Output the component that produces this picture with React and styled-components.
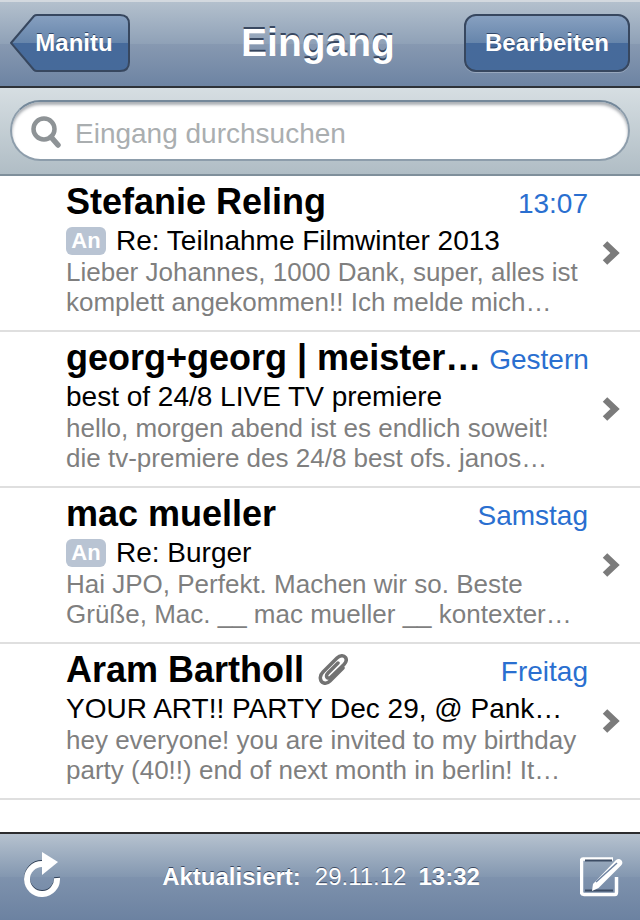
import styled, { createGlobalStyle } from 'styled-components'

const Global = createGlobalStyle`
  html, body {
    margin: 0;
    padding: 0;
    background: white;
  }
  * {
    box-sizing: border-box;
  }
`

const Page = styled.div`
  width: 640px;
  height: 920px;
  display: flex;
  flex-direction: column;
  overflow: hidden;
  font-family: 'Liberation Sans', Arial, sans-serif;
`

const NavBar = styled.header`
  height: 88px;
  flex: none;
  display: flex;
  align-items: center;
  justify-content: space-between;
  padding: 0 10px 2px 10px;
  position: relative;
  border-top: 2px solid #d3d9df;
  border-bottom: 2px solid #2e3238;
  background: linear-gradient(#b3c0cd 0%, #8fa1b7 50%, #8799b1 50%, #6d84a3 100%);
`

const Title = styled.h1`
  position: absolute;
  left: 0;
  right: 4px;
  top: 19px;
  margin: 0;
  text-align: center;
  font-size: 39px;
  line-height: 44px;
  font-weight: bold;
  color: white;
  text-shadow: 0 -2px 0 rgba(40, 55, 80, 0.85);
`

const BackButton = styled.button`
  position: relative;
  width: 120px;
  height: 58px;
  margin: 0;
  padding: 0 0 0 8px;
  border: 0;
  background: none;
  font: bold 24px 'Liberation Sans', Arial, sans-serif;
  color: white;
  text-shadow: 0 -1px 0 rgba(20, 40, 70, 0.7);

  svg {
    position: absolute;
    left: 0;
    top: 0;
  }

  span {
    position: relative;
  }
`

const EditButton = styled.button`
  width: 166px;
  height: 58px;
  margin: 0;
  padding: 0;
  border: 2px solid #37475f;
  border-radius: 12px;
  background: linear-gradient(#87a0c0 0%, #6685ab 50%, #466a9b 50%, #466a9a 100%);
  box-shadow: 0 1px 0 rgba(255, 255, 255, 0.25);
  font: bold 24px 'Liberation Sans', Arial, sans-serif;
  color: white;
  text-shadow: 0 -1px 0 rgba(20, 40, 70, 0.7);
`

const SearchBar = styled.div`
  height: 88px;
  flex: none;
  padding: 12px 10px 13px 10px;
  border-bottom: 2px solid #7f8f9b;
  background: linear-gradient(#d6dee2, #b0bdc5);
`

const SearchField = styled.div`
  height: 61px;
  display: flex;
  align-items: center;
  gap: 14px;
  padding: 2px 0 0 19px;
  border: 2px solid #8d9dab;
  border-top-color: #74889a;
  border-radius: 31px;
  background: white;
  box-shadow: inset 0 3px 3px rgba(70, 80, 90, 0.45);
  font-size: 28px;
  line-height: 32px;
  color: #aaaeb0;

  span {
    position: relative;
    top: 2px;
  }
`

const List = styled.main`
  flex: 1;
  background: white;
`

const Row = styled.article`
  height: 156px;
  padding: 8px 0 0 66px;
  position: relative;
  border-bottom: 2px solid #dfdfdf;
`

const TopLine = styled.div`
  height: 38px;
  width: 522px;
  display: flex;
  align-items: center;
  justify-content: space-between;
  gap: 8px;
`

const Sender = styled.div`
  display: flex;
  align-items: center;
  gap: 14px;
  margin-top: -2px;
  font-size: 36px;
  font-weight: bold;
  color: black;
  white-space: nowrap;
`

const When = styled.time`
  margin-top: 2px;
  font-size: 28px;
  color: #2a6fd0;
  white-space: nowrap;
`

const SubjectLine = styled.div`
  height: 36px;
  padding-top: 1px;
  display: flex;
  align-items: center;
  gap: 10px;
  font-size: 28px;
  color: black;
  white-space: nowrap;
`

const Badge = styled.span`
  width: 40px;
  height: 28px;
  display: flex;
  align-items: center;
  justify-content: center;
  border-radius: 6px;
  background: #b9c4d3;
  font-size: 22px;
  font-weight: bold;
  color: white;
`

const Preview = styled.p`
  margin: -1px 0 0 0;
  width: 540px;
  font-size: 26px;
  line-height: 30px;
  color: #7f7f7f;
  white-space: pre-line;
`

const Chevron = styled.svg`
  position: absolute;
  right: 20px;
  top: 64px;
`

const ToolBar = styled.footer`
  height: 88px;
  flex: none;
  display: flex;
  align-items: center;
  justify-content: space-between;
  padding: 0 16px 0 24px;
  border-top: 2px solid #2c2c2e;
  background: linear-gradient(#b6c2cf 0%, #8397b0 50%, #7e92ad 50%, #6c82a1 100%);
`

const RefreshSvg = styled.svg`
  margin-bottom: 6px;
`

const Status = styled.div`
  display: flex;
  gap: 14px;
  font-size: 24px;
  color: white;
  text-shadow: 0 -1px 0 rgba(30, 45, 70, 0.75);

  b {
    font-weight: bold;
  }

  b:last-child {
    margin-left: -2px;
  }
`

const mails = [
  {
    sender: 'Stefanie Reling',
    when: '13:07',
    badge: true,
    subject: 'Re: Teilnahme Filmwinter 2013',
    preview: 'Lieber Johannes, 1000 Dank, super, alles ist\nkomplett angekommen!! Ich melde mich…',
  },
  {
    sender: 'georg+georg | meister…',
    when: 'Gestern',
    subject: 'best of 24/8 LIVE TV premiere',
    preview: 'hello, morgen abend ist es endlich soweit!\ndie tv-premiere des 24/8 best ofs. janos…',
  },
  {
    sender: 'mac mueller',
    when: 'Samstag',
    badge: true,
    subject: 'Re: Burger',
    preview: 'Hai JPO, Perfekt. Machen wir so. Beste\nGrüße, Mac. __ mac mueller __ kontexter…',
  },
  {
    sender: 'Aram Bartholl',
    when: 'Freitag',
    clip: true,
    subject: 'YOUR ART!! PARTY Dec 29, @ Pank…',
    preview: 'hey everyone! you are invited to my birthday\nparty (40!!) end of next month in berlin! It…',
  },
]

function BackShape() {
  return (
    <svg width="120" height="58" viewBox="0 0 120 58">
      <defs>
        <linearGradient id="backFill" x1="0" y1="0" x2="0" y2="1">
          <stop offset="0" stopColor="#87a0c0" />
          <stop offset="0.5" stopColor="#6685ab" />
          <stop offset="0.5" stopColor="#466a9b" />
          <stop offset="1" stopColor="#466a9a" />
        </linearGradient>
      </defs>
      <path
        d="M1 29 L24 2 Q25 1 27 1 H110 Q119 1 119 10 V48 Q119 57 110 57 H27 Q25 57 24 56 Z"
        fill="url(#backFill)"
        stroke="#37475f"
        strokeWidth="2"
      />
    </svg>
  )
}

function SearchIcon() {
  return (
    <svg width="30" height="32" viewBox="0 0 30 32" fill="none">
      <circle cx="13" cy="13" r="10.5" stroke="#8e9396" strokeWidth="4.5" />
      <path d="M20 21 L27 29" stroke="#8e9396" strokeWidth="5.5" strokeLinecap="round" />
    </svg>
  )
}

function ClipIcon() {
  return (
    <svg width="30" height="34" viewBox="0 0 30 34" fill="none">
      <path
        d="M25 15 L12 28 C8 32 3 30 2.500 26 C2 24 3 21 5 19 L19 5 C22 2 26 2 27.500 4.500 C29 7 28 9.500 26 11.500 L13 24 C11 26 8.500 25 8.500 23 C8.500 22 9 21 10 20 L20 10"
        stroke="#727272"
        strokeWidth="3.500"
        strokeLinecap="round"
        strokeLinejoin="round"
      />
    </svg>
  )
}

function RefreshIcon() {
  return (
    <RefreshSvg width="38" height="46" viewBox="0 0 38 46" fill="none">
      <path
        d="M33 27 A15 15 0 1 1 18 13"
        stroke="#2f3f55"
        strokeWidth="6"
        transform="translate(0 -1)"
      />
      <path d="M33 27 A15 15 0 1 1 18 13" stroke="white" strokeWidth="6" />
      <path d="M18 1 L34 11 L18 24 Z" fill="white" />
    </RefreshSvg>
  )
}

function ComposeIcon() {
  return (
    <svg width="44" height="42" viewBox="0 0 44 42" fill="none">
      <path
        d="M33 3 H3 Q1.500 3 1.500 5 V36 Q1.500 38.500 4 38.500 H35 Q36.500 38.500 36.500 36 V21"
        stroke="white"
        strokeWidth="3.500"
      />
      <path d="M5 4.500 H32 M5 34.500 H33" stroke="#3c4c64" strokeWidth="2" />
      <path d="M13 28 L36 4 Q39 2 41.500 4.500 Q43.500 7 41 9.500 L18.500 32 L12 35 Z" fill="white" />
      <path d="M16 26 L37 7" stroke="#6d82a0" strokeWidth="1.500" />
    </svg>
  )
}

function Mail({ mail }) {
  return (
    <Row>
      <TopLine>
        <Sender>
          {mail.sender}
          {mail.clip ? <ClipIcon /> : null}
        </Sender>
        <When>{mail.when}</When>
      </TopLine>
      <SubjectLine>
        {mail.badge ? <Badge>An</Badge> : null}
        {mail.subject}
      </SubjectLine>
      <Preview>{mail.preview}</Preview>
      <Chevron width="18" height="26" viewBox="0 0 18 26">
        <path d="M3 3.500 L13 13 L3 22.500" fill="none" stroke="#7b7b7b" strokeWidth="6.500" />
      </Chevron>
    </Row>
  )
}

export default function App() {
  return (
    <Page>
      <Global />
      <NavBar>
        <BackButton>
          <BackShape />
          <span>Manitu</span>
        </BackButton>
        <Title>Eingang</Title>
        <EditButton>Bearbeiten</EditButton>
      </NavBar>
      <SearchBar>
        <SearchField>
          <SearchIcon />
          <span>Eingang durchsuchen</span>
        </SearchField>
      </SearchBar>
      <List>
        {mails.map((mail) => (
          <Mail key={mail.sender} mail={mail} />
        ))}
      </List>
      <ToolBar>
        <RefreshIcon />
        <Status>
          <b>Aktualisiert:</b>
          <span>29.11.12</span>
          <b>13:32</b>
        </Status>
        <ComposeIcon />
      </ToolBar>
    </Page>
  )
}
